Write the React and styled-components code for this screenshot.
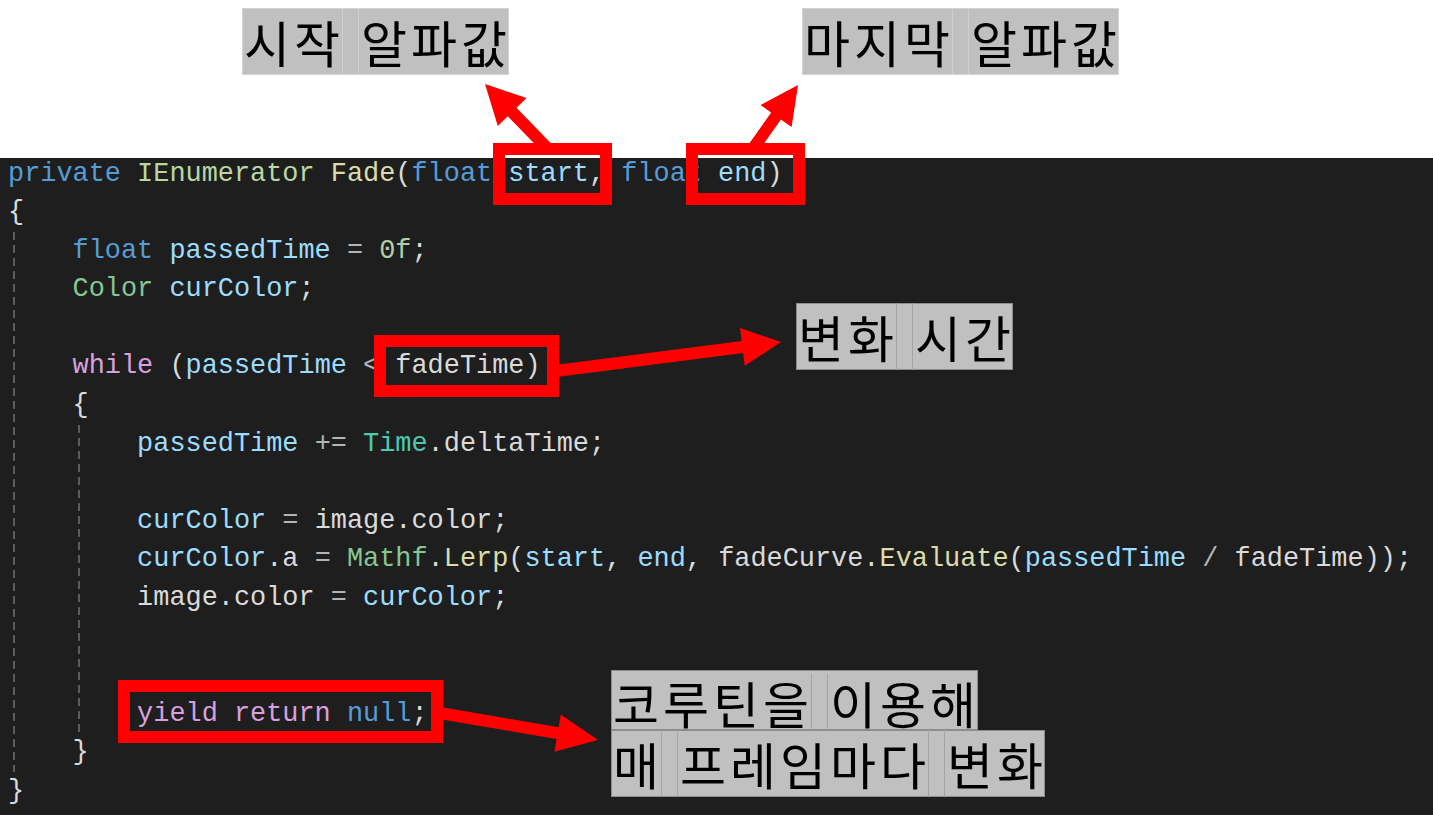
import styled, { createGlobalStyle } from 'styled-components'

const GlobalStyle = createGlobalStyle`
    html, body {
        margin: 0;
        padding: 0;
        background: #ffffff;
    }
`

const COLORS = {
    kw: '#569cd6',
    ctl: '#d8a0df',
    type: '#4ec9b0',
    iface: '#b8d7a3',
    struct: '#86c691',
    fn: '#dcdcaa',
    var: '#9cdcfe',
    field: '#dadada',
    num: '#b5cea8',
    op: '#b4b4b4',
    punc: '#dadada',
}

const Page = styled.div`
    position: relative;
    width: 1433px;
    height: 827px;
    overflow: hidden;
    background: #ffffff;
`

const Header = styled.div`
    height: 158px;
    box-sizing: border-box;
    display: flex;
    align-items: flex-start;
    gap: 293px;
    padding: 8px 0 0 242px;
`

const Label = styled.div`
    display: flex;
    flex-direction: column;
    font-family: "Noto Sans CJK KR", "Noto Sans", sans-serif;
    font-size: 50px;
    color: #000;
`

const LabelRow = styled.div`
    display: flex;
    box-sizing: border-box;
    height: ${p => (p.$short ? 60 : 67)}px;
    line-height: ${p => (p.$short ? 56 : 67)}px;
    padding-top: ${p => (p.$short ? 4 : 0)}px;
    align-self: flex-start;
    background: #c0c0c0;
    box-shadow: inset 0 0 0 1px ${p => (p.$dark ? '#8c8c8c' : '#d4d4d4')};
`

const Word = styled.span`
    display: block;
    white-space: nowrap;
    letter-spacing: 4px;
    padding-left: 2px;
    margin-right: -2px;
`

const Gap = styled.span`
    display: block;
    width: 17px;
    box-sizing: border-box;
    border-left: 1px solid ${p => (p.$dark ? '#a4a4a4' : '#d0d0d0')};
    border-right: 1px solid ${p => (p.$dark ? '#a4a4a4' : '#d0d0d0')};
`

const Piece = styled.span`
    display: flex;
`

const Panel = styled.div`
    height: 657px;
    background: #1e1e1e;
    overflow: hidden;
    padding-left: 8px;
`

const Code = styled.div`
    margin-top: -3.5px;
    font-family: "Liberation Mono", "DejaVu Sans Mono", monospace;
    font-size: 26.9px;
    color: #dadada;
`

const Line = styled.div`
    height: 38.6px;
    line-height: 38.6px;
    white-space: pre;
`

const Block = styled.div`
    background-image: repeating-linear-gradient(to bottom, #5c5c5c 0 8px, transparent 8px 13px);
    background-size: 2px 100%;
    background-repeat: no-repeat;
    background-position: ${p => p.$guide}px 0;
`

const T = styled.span`
    color: ${p => COLORS[p.$k]};
`

const RedBox = styled.div`
    position: absolute;
    box-sizing: border-box;
    border: 12px solid #ff0000;
    left: ${p => p.$x}px;
    top: ${p => p.$y}px;
    width: ${p => p.$w}px;
    height: ${p => p.$h}px;
`

const Callout = styled.div`
    position: absolute;
    left: ${p => p.$x}px;
    top: ${p => p.$y}px;
`

const Overlay = styled.svg`
    position: absolute;
    left: 0;
    top: 0;
    pointer-events: none;
`

const arrowPoints = (x1, y1, x2, y2, len, half, w = 12) => {
    const dx = x2 - x1
    const dy = y2 - y1
    const d = Math.hypot(dx, dy)
    const ux = dx / d
    const uy = dy / d
    const nx = -uy
    const ny = ux
    const bx = x2 - ux * len
    const by = y2 - uy * len
    const pts = [
        [x1 + nx * w / 2, y1 + ny * w / 2],
        [bx + nx * w / 2, by + ny * w / 2],
        [bx + nx * half, by + ny * half],
        [x2, y2],
        [bx - nx * half, by - ny * half],
        [bx - nx * w / 2, by - ny * w / 2],
        [x1 - nx * w / 2, y1 - ny * w / 2],
    ]
    return pts.map(p => p.map(v => v.toFixed(1)).join(',')).join(' ')
}

const ARROWS = [
    [549, 150, 485, 84, 39, 20],
    [752, 150, 798, 85, 38, 19],
    [556, 371, 781, 342, 39, 19],
    [440, 713, 598, 740, 41, 19],
]

const Tag = ({ rows, dark }) => (
    <Label>
        {rows.map((row, i) => (
            <LabelRow key={i} $dark={dark} $short={i < rows.length - 1}>
                {row.map((w, j) => (
                    <Piece key={j}>
                        {j > 0 && <Gap $dark={dark} />}
                        <Word>{w}</Word>
                    </Piece>
                ))}
            </LabelRow>
        ))}
    </Label>
)

const App = () => {
    return (
        <Page>
            <GlobalStyle />
            <Header>
                <Tag rows={[['시작', '알파값']]} />
                <Tag rows={[['마지막', '알파값']]} />
            </Header>

            <Panel>
                <Code>
                    <Line>
                        <T $k="kw">private</T> <T $k="iface">IEnumerator</T> <T $k="fn">Fade</T><T $k="punc">(</T><T $k="kw">float</T> <T $k="var">start</T><T $k="punc">,</T> <T $k="kw">float</T> <T $k="var">end</T><T $k="punc">)</T>
                    </Line>
                    <Line><T $k="punc">{'{'}</T></Line>
                    <Block $guide={5}>
                        <Line>{'    '}<T $k="kw">float</T> <T $k="var">passedTime</T> <T $k="op">=</T> <T $k="num">0f</T><T $k="punc">;</T></Line>
                        <Line>{'    '}<T $k="struct">Color</T> <T $k="var">curColor</T><T $k="punc">;</T></Line>
                        <Line />
                        <Line>{'    '}<T $k="ctl">while</T> <T $k="punc">(</T><T $k="var">passedTime</T> <T $k="op">{'<'}</T> <T $k="field">fadeTime</T><T $k="punc">)</T></Line>
                        <Line>{'    '}<T $k="punc">{'{'}</T></Line>
                        <Block $guide={70}>
                            <Line>{'        '}<T $k="var">passedTime</T> <T $k="op">+=</T> <T $k="type">Time</T><T $k="punc">.</T><T $k="field">deltaTime</T><T $k="punc">;</T></Line>
                            <Line />
                            <Line>{'        '}<T $k="var">curColor</T> <T $k="op">=</T> <T $k="field">image</T><T $k="punc">.</T><T $k="field">color</T><T $k="punc">;</T></Line>
                            <Line>
                                {'        '}<T $k="var">curColor</T><T $k="punc">.</T><T $k="field">a</T> <T $k="op">=</T> <T $k="struct">Mathf</T><T $k="punc">.</T><T $k="fn">Lerp</T><T $k="punc">(</T><T $k="var">start</T><T $k="punc">,</T> <T $k="var">end</T><T $k="punc">,</T> <T $k="field">fadeCurve</T><T $k="punc">.</T><T $k="fn">Evaluate</T><T $k="punc">(</T><T $k="var">passedTime</T> <T $k="op">/</T> <T $k="field">fadeTime</T><T $k="punc">));</T>
                            </Line>
                            <Line>{'        '}<T $k="field">image</T><T $k="punc">.</T><T $k="field">color</T> <T $k="op">=</T> <T $k="var">curColor</T><T $k="punc">;</T></Line>
                            <Line />
                            <Line />
                            <Line>{'        '}<T $k="ctl">yield</T> <T $k="ctl">return</T> <T $k="kw">null</T><T $k="punc">;</T></Line>
                        </Block>
                        <Line>{'    '}<T $k="punc">{'}'}</T></Line>
                    </Block>
                    <Line><T $k="punc">{'}'}</T></Line>
                </Code>
            </Panel>

            {/* annotations drawn over the code */}
            <RedBox $x={493} $y={143} $w={119} $h={62} />
            <RedBox $x={686} $y={143} $w={119} $h={62} />
            <RedBox $x={374} $y={335} $w={185} $h={62} />
            <RedBox $x={118} $y={680} $w={325} $h={63} />

            <Overlay width="1433" height="827" viewBox="0 0 1433 827">
                {ARROWS.map((a, i) => (
                    <polygon key={i} points={arrowPoints(...a)} fill="#ff0000" />
                ))}
            </Overlay>

            <Callout $x={796} $y={303}>
                <Tag dark rows={[['변화', '시간']]} />
            </Callout>
            <Callout $x={611} $y={670}>
                <Tag dark rows={[['코루틴을', '이용해'], ['매', '프레임마다', '변화']]} />
            </Callout>
        </Page>
    )
}

export default App
